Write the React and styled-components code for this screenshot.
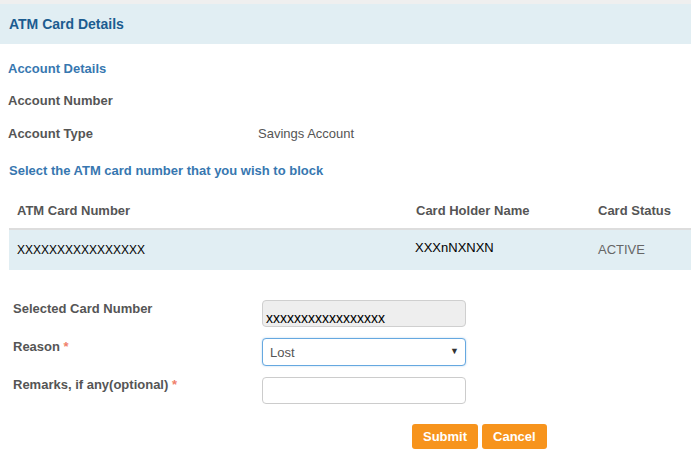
import React from "react";
import styled, { createGlobalStyle } from "styled-components";

const GlobalStyle = createGlobalStyle`
  html, body { margin: 0; padding: 0; background: #fff; }
  body { font-family: "Liberation Sans", Arial, sans-serif; font-size: 13px; color: #555; }
  * { box-sizing: border-box; }
`;

const cards = [
  { number: "XXXXXXXXXXXXXXXX", holder: "XXXnNXNXN", status: "ACTIVE" },
];

export default function App() {
  return (
    <>
      <GlobalStyle />
      <Page>
        <TitleBar>ATM Card Details</TitleBar>

        <Info>
          <SectionTitle>Account Details</SectionTitle>
          <InfoRow>
            <InfoLabel>Account Number</InfoLabel>
            <InfoValue></InfoValue>
          </InfoRow>
          <InfoRow>
            <InfoLabel>Account Type</InfoLabel>
            <InfoValue>Savings Account</InfoValue>
          </InfoRow>
          <SectionTitle $top={4}>Select the ATM card number that you wish to block</SectionTitle>
        </Info>

        <CardTable>
          <thead>
            <tr>
              <Th $w={399}>ATM Card Number</Th>
              <Th $w={182}>Card Holder Name</Th>
              <Th>Card Status</Th>
            </tr>
          </thead>
          <tbody>
            {cards.map((c) => (
              <CardRow key={c.number}>
                <Td $size={12} $dark>{c.number}</Td>
                <Td $dark $lift>{c.holder}</Td>
                <Td>{c.status}</Td>
              </CardRow>
            ))}
          </tbody>
        </CardTable>

        <Form>
          <FormRow>
            <FormLabel>Selected Card Number</FormLabel>
            <ReadOnlyField>xxxxxxxxxxxxxxxxx</ReadOnlyField>
          </FormRow>
          <FormRow>
            <FormLabel>
              Reason <Star>*</Star>
            </FormLabel>
            <SelectWrap>
              <Select defaultValue="Lost">
                <option>Lost</option>
                <option>Stolen</option>
                <option>Damaged</option>
              </Select>
              <Arrow>▼</Arrow>
            </SelectWrap>
          </FormRow>
          <FormRow>
            <FormLabel>
              Remarks, if any(optional) <Star>*</Star>
            </FormLabel>
            <TextField type="text" />
          </FormRow>
          <ButtonBar>
            <Button>Submit</Button>
            <Button>Cancel</Button>
          </ButtonBar>
        </Form>
      </Page>
    </>
  );
}

const Page = styled.div`
  width: 691px;
  min-height: 458px;
  border-top: 4px solid #efefef;
`;

const TitleBar = styled.div`
  height: 40px;
  display: flex;
  align-items: center;
  padding-left: 9px;
  background: #e1eef3;
  color: #1b5c90;
  font-size: 14px;
  font-weight: bold;
`;

const Info = styled.div`
  padding: 8px 0 0 8px;
`;

const SectionTitle = styled.div`
  height: 32px;
  margin-top: ${({ $top }) => $top || 0}px;
  display: flex;
  align-items: center;
  padding-left: ${({ $top }) => ($top ? 1 : 0)}px;
  color: #3777b0;
  font-weight: bold;
`;

const InfoRow = styled.div`
  height: 33px;
  display: flex;
  align-items: center;
`;

const InfoLabel = styled.div`
  width: 250px;
  font-weight: bold;
  color: #555;
`;

const InfoValue = styled.div`
  color: #555;
`;

const CardTable = styled.table`
  margin: 6px 0 0 9px;
  width: 682px;
  border-collapse: collapse;
`;

const Th = styled.th`
  width: ${({ $w }) => ($w ? `${$w}px` : "auto")};
  height: 37px;
  padding: 0 8px;
  text-align: left;
  font-weight: bold;
  color: #555;
  border-bottom: 2px solid #dddddd;
`;

const CardRow = styled.tr`
  background: #e1eef3;
`;

const Td = styled.td`
  height: 41px;
  padding: ${({ $lift }) => ($lift ? "0 8px 5px 7px" : "0 8px 1px")};
  font-size: ${({ $size }) => $size || 13}px;
  color: ${({ $dark }) => ($dark ? "#000" : "#666")};
`;

const Form = styled.div`
  padding: 30px 0 0 13px;
`;

const FormRow = styled.div`
  display: grid;
  grid-template-columns: 249px 204px;
  height: 38px;
`;

const FormLabel = styled.div`
  padding-top: 1px;
  line-height: 15px;
  font-weight: bold;
  color: #555;
`;

const Star = styled.span`
  color: #f0806a;
`;

const ReadOnlyField = styled.div`
  height: 27px;
  padding: 10px 0 0 3px;
  border: 1px solid #cfcfcf;
  border-radius: 4px;
  background: #eeeeee;
  color: #000;
  font-size: 14px;
  line-height: 15px;
`;

const SelectWrap = styled.div`
  position: relative;
  height: 28px;
`;

const Select = styled.select`
  appearance: none;
  width: 100%;
  height: 28px;
  padding: 0 20px 0 7px;
  border: 1px solid #66a8e0;
  border-radius: 4px;
  background: #fff;
  box-shadow: 0 0 2px rgba(102, 168, 224, 0.5);
  font-family: inherit;
  font-size: 13px;
  color: #555;
  outline: none;
`;

const Arrow = styled.span`
  position: absolute;
  right: 7px;
  top: 8px;
  font-size: 9px;
  line-height: 10px;
  color: #333;
  pointer-events: none;
`;

const TextField = styled.input`
  height: 27px;
  margin-top: 1px;
  padding: 0 7px;
  border: 1px solid #cccccc;
  border-radius: 4px;
  font-family: inherit;
  font-size: 13px;
  outline: none;
`;

const ButtonBar = styled.div`
  display: flex;
  gap: 4px;
  margin-top: 10px;
  padding-left: 399px;
`;

const Button = styled.button`
  height: 25px;
  padding: 0 11px;
  border: none;
  border-radius: 3px;
  background: #f7941d;
  color: #fff;
  font-family: inherit;
  font-size: 13px;
  font-weight: bold;
  cursor: pointer;
`;
